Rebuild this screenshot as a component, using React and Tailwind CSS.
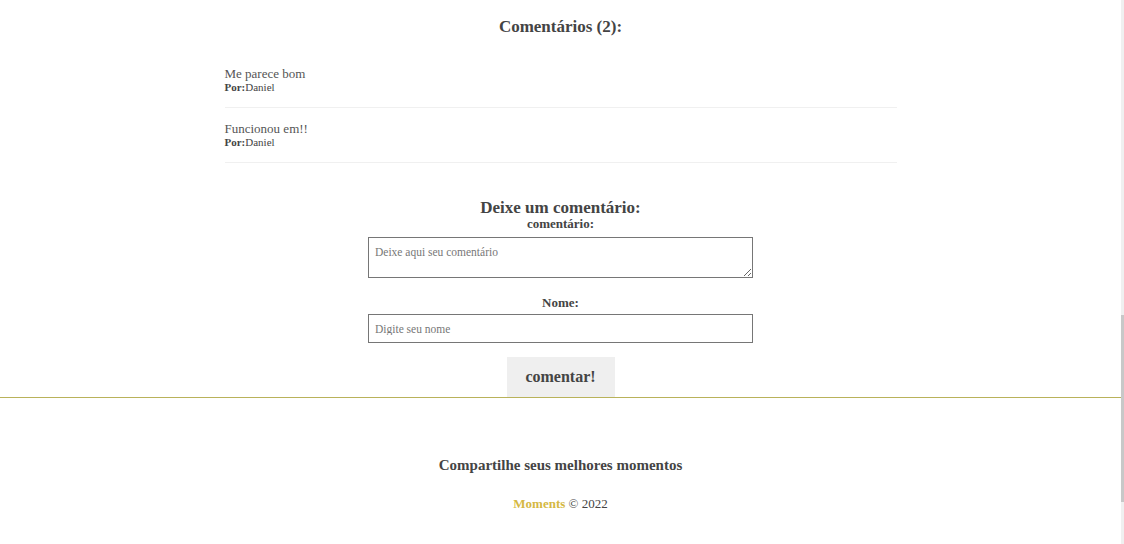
import React from "react";

const comments = [
  { id: 1, text: "Me parece bom", author: "Daniel" },
  { id: 2, text: "Funcionou em!!", author: "Daniel" },
];

export default function App() {
  return (
    <div className="flex h-[544px] overflow-hidden bg-white font-['Liberation_Serif',serif] text-[#444]">
      <div className="flex w-[1121px] flex-col">
        <main className="flex flex-col items-center pt-[16px]">
          <h3 className="text-[17px] font-bold leading-[22px] text-[#444]">Comentários ({comments.length}):</h3>
          <div className="mt-[23px] w-[672px]">
            {comments.map((c) => (
              <div key={c.id} className="border-b border-[#f0f0f0] pb-[14px] pt-[6px] mb-[8px]">
                <p className="text-[13px] leading-[14px] text-[#555]">{c.text}</p>
                <p className="text-[11px] leading-[12px] text-[#444]">
                  <span className="font-bold">Por:</span>
                  {c.author}
                </p>
              </div>
            ))}
          </div>
          <h3 className="mt-[28px] text-[17px] font-bold leading-[18px] text-[#444]">Deixe um comentário:</h3>
          <form className="flex flex-col items-center">
            <label className="text-[13px] font-bold leading-[14px] text-[#444]">comentário:</label>
            <textarea
              placeholder="Deixe aqui seu comentário"
              className="mt-[6px] h-[41px] w-[385px] border border-[#767676] px-[6px] py-[7px] text-[11.5px] leading-[14px] text-[#444] placeholder:text-[#777] outline-none"
            />
            <label className="mt-[17px] text-[13px] font-bold leading-[16px] text-[#444]">Nome:</label>
            <input
              placeholder="Digite seu nome"
              className="mt-[3px] h-[29px] w-[385px] border border-[#767676] px-[6px] text-[11.5px] text-[#444] placeholder:text-[#777] outline-none"
            />
            <button
              type="button"
              className="mt-[14px] h-[40px] w-[108px] bg-[#efefef] text-[16px] font-bold text-[#444]"
            >
              comentar!
            </button>
          </form>
        </main>
        <div className="h-px bg-[#b9b25a]" />
        <footer className="flex flex-1 flex-col items-center pt-[57px]">
          <h4 className="text-[15px] font-bold leading-[20px] text-[#444]">Compartilhe seus melhores momentos</h4>
          <p className="mt-[21px] text-[13px] leading-[16px] text-[#444]">
            <span className="font-bold text-[#d5b843]">Moments</span> © 2022
          </p>
        </footer>
      </div>
      <div className="flex w-[3px] flex-col bg-[#f0f0f0] pt-[315px]">
        <div className="h-[187px] bg-[#c8c8c8]" />
      </div>
    </div>
  );
}
